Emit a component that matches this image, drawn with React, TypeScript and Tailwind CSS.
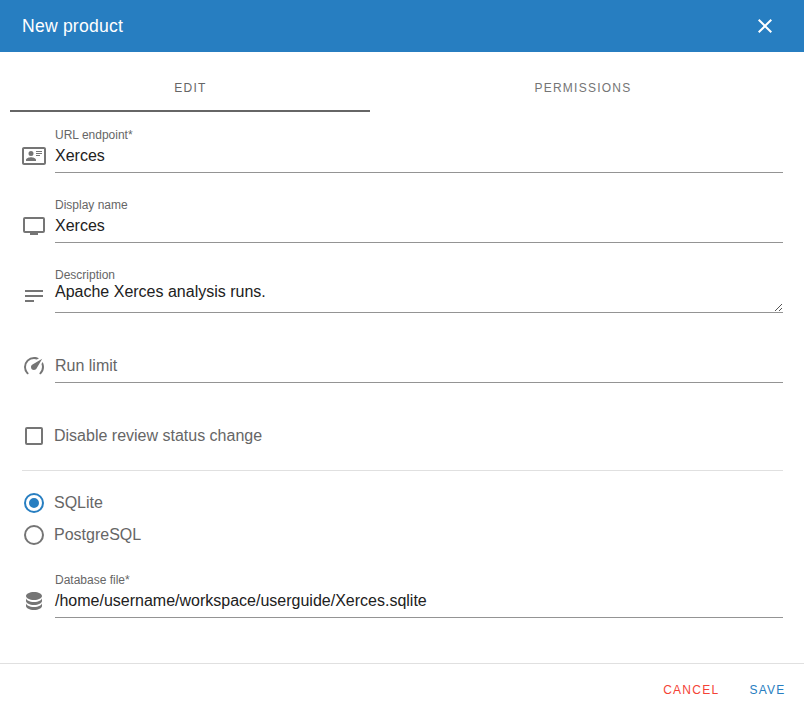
import React from "react";

function Icon({ d }: { d: string }) {
  return (
    <svg viewBox="0 0 24 24" className="mt-[18px] mr-[9px] h-6 w-6 shrink-0" fill="#757575">
      <path d={d} />
    </svg>
  );
}

function Field({ icon, label, value, area }: { icon: string; label?: string; value: string; area?: boolean }) {
  return (
    <div className="flex h-[70px]">
      <Icon d={icon} />
      <div className="relative h-[47px] flex-1 border-b border-[#949494]">
        {label && <div className="h-4 text-[12px] leading-[18px] text-[#666]">{label}</div>}
        <div
          className={
            area
              ? "text-[16px] leading-[20px] text-[#212121]"
              : label
                ? "pt-[2px] text-[16px] leading-[24px] text-[#212121]"
                : "pt-[18px] text-[16px] leading-[24px] text-[#666]"
          }
        >
          {value}
        </div>
        {area && (
          <svg
            className="absolute right-[1px] bottom-[1px] h-[7px] w-[7px]"
            viewBox="0 0 7 7"
            fill="#555"
            shapeRendering="crispEdges"
          >
            <path d="M6 0h1v1h-1zM5 1h1v1h-1zM4 2h1v1h-1zM3 3h1v1h-1zM2 4h1v1h-1zM1 5h1v1h-1zM0 6h1v1h-1zM6 4h1v1h-1zM5 5h1v1h-1zM4 6h1v1h-1z" />
          </svg>
        )}
      </div>
    </div>
  );
}

const card =
  "M22 3H2C.91 3 0 3.91 0 5v14c0 1.09.91 2 2 2h20c1.09 0 2-.91 2-2V5c0-1.09-.91-2-2-2m0 16H2V5h20v14m-8-2v-1.25c0-1.66-3.34-2.5-5-2.5s-5 .84-5 2.5V17h10M9 7a2.5 2.5 0 1 0 0 5 2.5 2.5 0 0 0 0-5m5 0v1h6V7h-6m0 2v1h6V9h-6m0 2v1h4v-1h-4";
const monitor =
  "M21 17H3V5h18m0-2H3a2 2 0 0 0-2 2v12a2 2 0 0 0 2 2h5v2h8v-2h5a2 2 0 0 0 2-2V5a2 2 0 0 0-2-2Z";
const text = "M3 6h18v2H3V6m0 5h18v2H3v-2m0 5h9v2H3v-2Z";
const gauge =
  "M12 16a3 3 0 0 1-3-3c0-1.12.61-2.1 1.5-2.61l9.71-5.62-5.53 9.58c-.5.98-1.51 1.65-2.68 1.65m0-13c1.81 0 3.5.5 4.97 1.32l-2.1 1.21C14 5.19 13 5 12 5a8 8 0 0 0-8 8c0 2.21.89 4.21 2.34 5.65h.01c.39.39.39 1.02 0 1.41s-1.03.39-1.42.01A9.97 9.97 0 0 1 2 13 10 10 0 0 1 12 3m10 10c0 2.76-1.12 5.26-2.93 7.07-.39.38-1.02.38-1.41-.01a.996.996 0 0 1 0-1.41A7.95 7.95 0 0 0 20 13c0-1-.19-2-.54-2.9L20.67 8C21.5 9.5 22 11.18 22 13Z";
const database =
  "M12 3C7.58 3 4 4.79 4 7s3.58 4 8 4 8-1.79 8-4-3.58-4-8-4M4 9v3c0 2.21 3.58 4 8 4s8-1.79 8-4V9c0 2.21-3.58 4-8 4s-8-1.79-8-4m0 5v3c0 2.21 3.58 4 8 4s8-1.79 8-4v-3c0 2.21-3.58 4-8 4s-8-1.79-8-4Z";

export default function App() {
  return (
    <div className="flex h-[713px] w-[804px] flex-col bg-white font-['Liberation_Sans',Arial,sans-serif]">
      <header className="flex h-[52px] items-center justify-between bg-[#277ec1] pr-[27px] pl-[22px] text-white">
        <h1 className="text-[17.6px] leading-6 tracking-[0.2px]">New product</h1>
        <svg viewBox="0 0 24 24" className="h-6 w-6" fill="white">
          <path d="M19 6.41 17.59 5 12 10.59 6.41 5 5 6.41 10.59 12 5 17.59 6.41 19 12 13.41 17.59 19 19 17.59 13.41 12 19 6.41Z" />
        </svg>
      </header>
      <nav className="mt-[12px] flex h-12 pl-[10px] text-[12px] tracking-[1.25px] text-[#757575]">
        <div className="flex w-[360px] shrink-0 items-center justify-center border-b-2 border-[#666] pt-[2px] pl-[1px] text-[#666]">
          EDIT
        </div>
        <div className="flex w-[426px] shrink-0 items-center justify-center">PERMISSIONS</div>
      </nav>
      <main className="h-[551px] pt-[14px] pr-[21px] pl-[22px]">
        <Field icon={card} label="URL endpoint*" value="Xerces" />
        <Field icon={monitor} label="Display name" value="Xerces" />
        <Field icon={text} label="Description" value="Apache Xerces analysis runs." area />
        <Field icon={gauge} value="Run limit" />
        <div className="flex h-[65px] items-start border-b border-[#e0e0e0] pt-[18px] text-[16px] leading-6 text-[#666]">
          <svg viewBox="0 0 24 24" className="mr-2 h-6 w-6" fill="#757575">
            <path d="M19 3H5a2 2 0 0 0-2 2v14a2 2 0 0 0 2 2h14a2 2 0 0 0 2-2V5a2 2 0 0 0-2-2m0 2v14H5V5h14Z" />
          </svg>
          Disable review status change
        </div>
        <div className="h-[100px] pt-5 text-[16px] leading-6 text-[#666]">
          <div className="mb-2 flex">
            <svg viewBox="0 0 24 24" className="mr-2 h-6 w-6" fill="#277ec1">
              <path d="M12 20a8 8 0 1 1 0-16 8 8 0 0 1 0 16m0-18a10 10 0 1 0 0 20 10 10 0 0 0 0-20m0 5a5 5 0 1 0 0 10 5 5 0 0 0 0-10Z" />
            </svg>
            SQLite
          </div>
          <div className="flex">
            <svg viewBox="0 0 24 24" className="mr-2 h-6 w-6" fill="#757575">
              <path d="M12 20a8 8 0 1 1 0-16 8 8 0 0 1 0 16m0-18a10 10 0 1 0 0 20 10 10 0 0 0 0-20Z" />
            </svg>
            PostgreSQL
          </div>
        </div>
        <Field icon={database} label="Database file*" value="/home/username/workspace/userguide/Xerces.sqlite" />
      </main>
      <footer className="flex h-[50px] items-center justify-end gap-[30px] border-t border-[#e0e0e0] pr-[18.5px] pt-[2px] text-[12px] tracking-[1.25px]">
        <span className="text-[#f44336]">CANCEL</span>
        <span className="text-[#277ec1]">SAVE</span>
      </footer>
    </div>
  );
}
